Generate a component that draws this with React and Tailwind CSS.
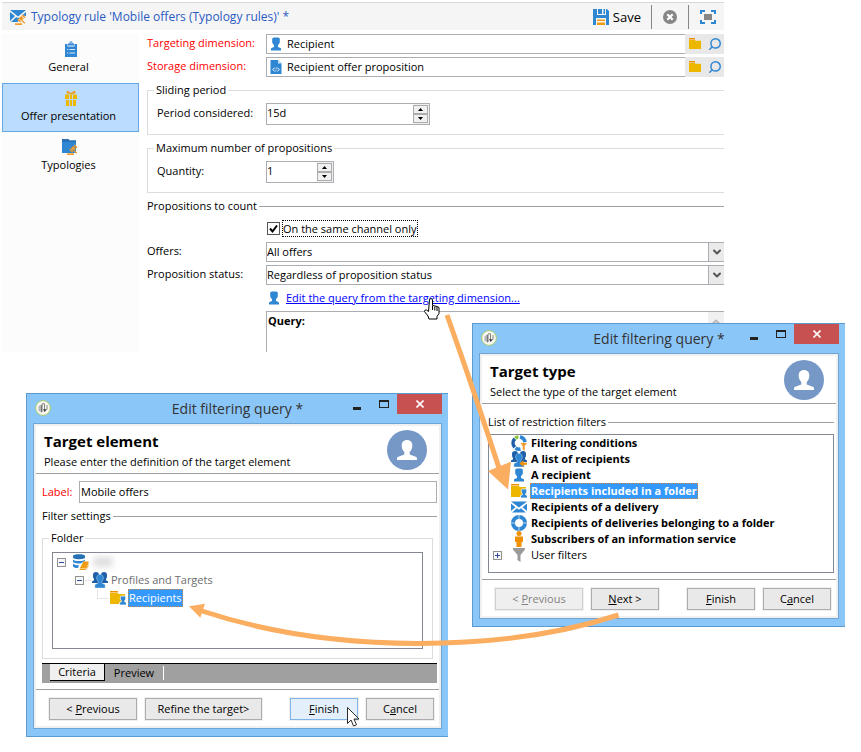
import { ChevronDown, ChevronUp, Search } from 'lucide-react';

function PersonIcon() {
  return (
    <svg viewBox="0 0 16 16" className="h-4 w-4" fill="#2f86d2">
      <path d="M6 1.500h4c1.200 0 1.800.7 1.800 1.800v2.500C11.800 7.500 10.800 8.500 10 9v2l2.500 1c.4.200.5.500.5 1v1.500H3V13c0-.5.1-.8.5-1L6 11V9C5.200 8.500 4.200 7.500 4.200 5.800V3.300C4.200 2.200 4.800 1.500 6 1.500z" />
    </svg>
  );
}

function Avatar() {
  return (
    <svg viewBox="0 0 40 40" className="mt-1 h-10 w-10 shrink-0">
      <circle cx="20" cy="20" r="20" fill="#7698c6" />
      <path d="M20 10c3.500 0 5.300 2.300 5.300 5.500 0 3-1 5-2.600 6.500v2.500l6 2.200c1 .4 1.300 1 1.300 2V30H10v-1.300c0-1 .3-1.600 1.300-2l6-2.200V22c-1.600-1.500-2.600-3.500-2.600-6.500 0-3.200 1.800-5.500 5.300-5.500z" fill="#fff" />
    </svg>
  );
}

function GavelShape() {
  return (
    <g fill="#f29b2a">
      <path d="M12.600 5.500l3 2.800-1 1-3-2.800z" />
      <path d="M11.300 7l2.600 2.500-2.700 2.400-2.600-2.500z" />
      <path d="M8.200 9.800l3 2.800-1 1-3-2.800z" />
      <path d="M12.300 11l3 2.700-.9 1L11.500 12z" />
      <path d="M5 14.300h7V16H5z" />
    </g>
  );
}

function MailRuleIcon() {
  return (
    <svg viewBox="0 0 18 16" className="h-4 w-[18px]">
      <path d="M0 1h16L8 7.500z" fill="#2f86d2" />
      <path d="M0 3l5 4-5 5zM16 3v4l-4-.5zM1 13l5.200-5L8 9.300 9.500 8 8 13z" fill="#2f86d2" />
      <GavelShape />
    </svg>
  );
}

function MailIcon() {
  return (
    <svg viewBox="0 0 16 16" className="h-4 w-4" fill="#2f86d2">
      <path d="M0 2.500h16L8 8.500zM0 4.500l4.500 3.700L0 12zM16 4.500l-4.500 3.700L16 12zM1 13.500l5-4.300 2 1.500 2-1.500 5 4.300z" />
    </svg>
  );
}

function ClipboardIcon() {
  return (
    <svg viewBox="0 0 16 16" className="h-4 w-4">
      <path d="M2 3h2.500v2.500h7V3H14v13H2z" fill="#2f86d2" />
      <path d="M5 2.500h1.500C6.500 1 7 .3 8 .3s1.500.7 1.500 2.200H11v2H5z" fill="#2f86d2" />
      <circle cx="8" cy="2" r=".7" fill="#fff" />
      <path d="M4 8h1.200v1H4zm2.500 0H12v1H6.500zM4 11.500h1.200v1H4zm2.500 0H12v1H6.500z" fill="#d9ebfa" />
    </svg>
  );
}

function GiftIcon() {
  return (
    <svg viewBox="0 0 16 16" className="h-4 w-4">
      <path d="M8 3.500C7 1 3.500 0 3.500 2.300c0 1.400 2 2 4.500 2s4.500-.6 4.500-2C12.500 0 9 1 8 3.500z" fill="#f09a12" />
      <path d="M5.800 2.300l1.300 1H5.300zM10.200 2.300l-1.300 1h1.800z" fill="#bbdcfc" />
      <path d="M2 4.500h12V9H2zM3 10h10v6H3z" fill="#edb700" />
      <path d="M6 4.500h.9V16H6zM9.100 4.500h.9V16h-.9z" fill="#bbdcfc" />
    </svg>
  );
}

function FolderRuleIcon() {
  return (
    <svg viewBox="0 0 17 16" className="h-4 w-[17px]">
      <path d="M0 0h6.500l1 1.300H14V3H0z" fill="#2672b5" />
      <path d="M0 3h14v11H0z" fill="#2f86d2" />
      <GavelShape />
    </svg>
  );
}

function DocumentIcon() {
  return (
    <svg viewBox="0 0 16 16" className="h-4 w-4">
      <path d="M2.500 1h7.500l3.500 3.500V15h-11z" fill="#2f86d2" />
      <path d="M10 1l3.500 3.500H10z" fill="#cfe4f7" />
      <path d="M6.800 8.500l-2 2 2 2M9.200 8.500l2 2-2 2" stroke="#fff" fill="none" />
      <path d="M8.500 8.800l-1 3.500" stroke="#9cc6ec" fill="none" />
    </svg>
  );
}

function FolderIcon() {
  return (
    <svg viewBox="0 0 14 12" className="h-3 w-3.5">
      <path d="M1 0h6v1.500H1z" fill="#f09000" />
      <path d="M1 2h6l.5.8H13V11H1z" fill="#edb700" />
    </svg>
  );
}

function PersonFolderIcon() {
  return (
    <svg viewBox="0 0 16 16" className="h-4 w-4">
      <path d="M0 1h8v1.500H0z" fill="#f09000" />
      <path d="M0 3h8l.5 1H15v10H0z" fill="#edb700" />
      <path d="M11.500 6h3c.8 0 1.200.5 1.200 1.300v1.500c0 .8-.5 1.400-1 1.700v1.300l1.800.7v2.500H9.500v-2.500l1.800-.7v-1.300c-.5-.3-1-.9-1-1.700V7.300c0-.8.4-1.300 1.200-1.300z" fill="#2f86d2" stroke="#fff" strokeWidth=".8" />
    </svg>
  );
}

function PeopleIcon({ arrow = false }) {
  return (
    <svg viewBox="0 0 16 16" className="h-4 w-4">
      <path d="M4 0c2 0 3 1 3 3v8H0V9.500l2-1.200V7C1 6 1 4.500 1 3c0-2 1-3 3-3zM12 0c2 0 3 1 3 3 0 1.500 0 3-1 4v1.300l2 1.200V11H9V3c0-2 1-3 3-3z" fill="#1f5fa8" />
      <path d="M8 2.500c2.200 0 3.300 1.500 3.300 3.500 0 1.600-.7 2.600-1.500 3.500v1.600l3.200 1.600V16H3v-3.300l3.200-1.600V9.500C5.400 8.600 4.700 7.600 4.700 6c0-2 1.100-3.500 3.300-3.500z" fill="#2f86d2" stroke="#9cc6ec" strokeWidth=".6" />
      {arrow && <path d="M16 11.500v2.200h-3.500V16L8.500 12.600l4-3.400v2.300z" fill="#f09000" />}
    </svg>
  );
}

function ConditionsIcon() {
  return (
    <svg viewBox="0 0 16 16" className="h-4 w-4" fill="none" strokeWidth="3.600">
      <path d="M3.800 3.800a6 6 0 0 0 0 8.400" stroke="#1f5fa8" />
      <path d="M4.200 3.200A6 6 0 0 1 7.400 2" stroke="#8cc63f" />
      <path d="M9 2a6 6 0 0 1 5 5.200" stroke="#2f86d2" />
      <path d="M4.500 13A6 6 0 0 0 9.500 14" stroke="#2f86d2" />
      <path d="M9.500 8H16l-2.300 3V16l-2-1.500V11z" fill="#f29b2a" />
    </svg>
  );
}

function RingIcon() {
  return (
    <svg viewBox="0 0 16 16" className="h-4 w-4" fill="none">
      <circle cx="8" cy="8" r="6" stroke="#2f86d2" strokeWidth="4" />
      <path d="M8 0v4M8 12v4M0 8h4M12 8h4" stroke="#b9d8f2" strokeWidth="1" />
    </svg>
  );
}

function SubscriberIcon() {
  return (
    <svg viewBox="0 0 16 16" className="h-4 w-4" fill="#f09000">
      <circle cx="8" cy="2.500" r="2.500" />
      <path d="M4 5.500h8V11h-1.500v5h-5v-5H4z" />
    </svg>
  );
}

function FunnelIcon() {
  return (
    <svg viewBox="0 0 16 16" className="h-4 w-4" fill="#9a9a9a">
      <path d="M2 1h12v1.500L9.500 8v7L6.500 13V8L2 2.500z" />
    </svg>
  );
}

function DatabaseIcon() {
  return (
    <svg viewBox="0 0 16 16" className="h-4 w-4">
      <path d="M0 2C0-.3 12-.3 12 2v1.500c0 2.300-12 2.300-12 0z" fill="#2672b5" />
      <path d="M0 5.500c1 2 11 2 12 0V7L7.500 9.500C4 9.500 0 9 0 7.500zM0 9.500c1 1.500 3.500 1.800 6 1.700L5 14c-3 0-5-.6-5-2z" fill="#2f86d2" />
      <path d="M10.500 7.500H16l-3.500 6.500H7z" fill="#f09a12" />
      <path d="M7 14h5.500l3-5M6.500 15.500h6l3-4" stroke="#f09a12" fill="none" />
    </svg>
  );
}

function SaveIcon() {
  return (
    <svg viewBox="0 0 16 16" className="h-4 w-4">
      <path d="M0 0h4v6h9V0h1l2 2v14H0z" fill="#2f86d2" />
      <path d="M5 0h4v5H5zM10.500 0H12v5h-1.500z" fill="#2f86d2" />
      <path d="M3 9h10v7H3z" fill="#f5f5f5" />
      <path d="M4 10.500h8V12H4zM4 13.500h8V16H4z" fill="#f09a12" />
    </svg>
  );
}

function CloseCircleIcon() {
  return (
    <svg viewBox="0 0 14 14" className="h-3.5 w-3.5">
      <circle cx="7" cy="7" r="7" fill="#868686" />
      <path d="M4.300 4.300l5.400 5.400M9.700 4.300L4.300 9.700" stroke="#fff" strokeWidth="2.200" />
    </svg>
  );
}

function FitIcon() {
  return (
    <svg viewBox="0 0 16 14" className="h-3.5 w-4">
      <path d="M1 4V1h4M11 1h4v3M15 10v3h-4M5 13H1v-3" stroke="#2f86d2" strokeWidth="2" fill="none" />
      <path d="M4 4h8v6H4z" fill="#868686" />
    </svg>
  );
}

function AppIcon() {
  return (
    <svg viewBox="0 0 16 16" className="h-4 w-4">
      <circle cx="8" cy="8" r="7.400" fill="#f7f8f2" stroke="#a6c96a" />
      <path d="M3.500 6l3-1.500v7.500l-3-1z" fill="#b5b5b5" />
      <path d="M6 5l1.500-1v8L6 12.500z" fill="#777" />
      <path d="M7 3.800h2.500V10M12 5v4.500" stroke="#777" strokeWidth=".9" fill="none" />
      <path d="M8 9.300h4L9.500 12z" fill="#3c3c3c" />
    </svg>
  );
}

function Toggle({ open }) {
  return (
    <svg viewBox="0 0 9 9" className="h-[9px] w-[9px] shrink-0">
      <rect x=".5" y=".5" width="8" height="8" fill="#f7f7f7" stroke="#919191" />
      <path d="M2 4.500h5" stroke="#33499b" />
      {!open && <path d="M4.500 2v5" stroke="#33499b" />}
    </svg>
  );
}

function Spinner({ id, value, className }) {
  return (
    <div className={`flex h-[22px] border border-[#abadb3] bg-white ${className}`}>
      <input id={id} defaultValue={value} className="h-[18px] w-0 grow outline-none" />
      <div className="flex w-4 flex-col bg-[#f0f0f0] py-px pr-px">
        <button aria-label="Increase" className="flex flex-1 items-center justify-center border border-[#acacac] bg-[#f0f0f0]">
          <svg viewBox="0 0 5 3" className="h-[3px] w-[5px]"><path d="M0 3h5L2.500 0z" /></svg>
        </button>
        <button aria-label="Decrease" className="flex flex-1 items-center justify-center border border-[#acacac] bg-[#f0f0f0]">
          <svg viewBox="0 0 5 3" className="h-[3px] w-[5px]"><path d="M0 0h5L2.500 3z" /></svg>
        </button>
      </div>
    </div>
  );
}

function PickerRow({ id, label, value, icon }) {
  return (
    <div className="flex h-5">
      <label htmlFor={id} className="w-[119px] shrink-0 text-[#ff0000]">{label}</label>
      <div className="flex grow items-center gap-[3px] border border-r-0 border-[#abadb3] bg-white pl-px">
        {icon}
        <input id={id} defaultValue={value} className="w-0 grow outline-none" />
      </div>
      <div className="flex w-[39px] items-center justify-between bg-[#e8e8e8] pr-0.5 pl-[3px]">
        <button aria-label={`Open ${value}`}><FolderIcon /></button>
        <button aria-label={`Find ${value}`}>
          <Search className="h-3.5 w-3.5 -scale-x-100 text-[#2f86d2]" strokeWidth={2.5} />
        </button>
      </div>
    </div>
  );
}

function Dropdown({ id, label, value }) {
  return (
    <div className="flex h-5">
      <label htmlFor={id} className="w-[119px] shrink-0">{label}</label>
      <div className="relative grow">
        <select id={id} className="block h-5 w-full appearance-none border border-r-0 border-[#abadb3] bg-white outline-none">
          <option>{value}</option>
        </select>
        <span className="pointer-events-none absolute top-px right-0 bottom-px flex w-4 items-center justify-center border-l border-[#abadb3] bg-[#eaeaea]">
          <ChevronDown className="h-3 w-3 text-[#555]" strokeWidth={4} />
        </span>
      </div>
    </div>
  );
}

function Divider({ label, className = '' }) {
  return (
    <div className={`flex h-4 items-center gap-0.5 ${className}`}>
      <span className="leading-4">{label}</span>
      <span className="h-px grow bg-[#a0a0a0]" />
    </div>
  );
}

function NavItem({ icon, label, active = false }) {
  return (
    <button
      className={`flex h-[49px] w-full flex-col items-center gap-0.5 border pt-1.5 ${
        active ? 'border-[#66a7e8] bg-[#bbdcfc]' : 'border-transparent'
      }`}
    >
      {icon}
      <span className="pr-1 leading-4">{label}</span>
    </button>
  );
}

// The character after the & is the underlined access key
function DialogButton({ label, className = 'w-[68px]', disabled = false, focused = false }) {
  const [before, after] = label.includes('&') ? label.split('&') : [label, ''];
  const tone = focused ? 'border-[#7eb4ea] bg-[#e3f0fc]' : 'border-[#acacac] bg-[#e9e9e9]';
  return (
    <button
      disabled={disabled}
      className={`h-[22px] border leading-5 whitespace-nowrap outline outline-[#f0f0f0] disabled:border-[#d0d0d0] disabled:bg-[#efefef] disabled:text-[#838383] ${tone} ${className}`}
    >
      {before}
      {after && <u>{after[0]}</u>}
      {after.slice(1)}
    </button>
  );
}

function Dialog({ heading, subtitle, className, children }) {
  return (
    <section className={`absolute flex flex-col border border-r-0 border-[#5b9bd0] bg-[#8bc6f9] pr-1.5 pb-[7px] pl-1.5 ${className}`}>
      <header className="relative flex h-[29px] shrink-0 items-start justify-between">
        <span className="mt-1.5 ml-0.5"><AppIcon /></span>
        <h1 className="absolute inset-x-0 top-1 text-center text-[14px] leading-[22px] text-[#333]">Edit filtering query *</h1>
        <div className="relative flex">
          <button aria-label="Minimize" className="flex h-5 w-[26px] items-center justify-center">
            <span className="mt-2 h-[3px] w-2 bg-[#222]" />
          </button>
          <button aria-label="Maximize" className="flex h-5 w-[27px] items-center justify-center">
            <span className="h-2 w-2.5 border border-t-2 border-[#222]" />
          </button>
          <button aria-label="Close" className="flex h-5 w-[45px] items-center justify-center bg-[#c75050]">
            <svg viewBox="0 0 8 8" className="h-2 w-2"><path d="M.5.5l7 7M7.500.5l-7 7" stroke="#fff" strokeWidth="1.600" /></svg>
          </button>
        </div>
      </header>
      <div className="flex grow flex-col border border-[#6fa5d2] bg-white outline-2 -outline-offset-3 outline-[#f0f0f0]">
        <div className="mx-0.5 mt-0.5 flex h-12 shrink-0 justify-between border-b border-[#a0a0a0] pr-3 pl-2">
          <div>
            <h2 className="mt-[3px] text-[15px] leading-6 font-bold">{heading}</h2>
            <p className="mt-px leading-4">{subtitle}</p>
          </div>
          <Avatar />
        </div>
        {children}
      </div>
    </section>
  );
}

const filters = [
  { label: 'Filtering conditions', icon: <ConditionsIcon /> },
  { label: 'A list of recipients', icon: <PeopleIcon arrow /> },
  { label: 'A recipient', icon: <PersonIcon /> },
  { label: 'Recipients included in a folder', icon: <PersonFolderIcon />, selected: true },
  { label: 'Recipients of a delivery', icon: <MailIcon /> },
  { label: 'Recipients of deliveries belonging to a folder', icon: <RingIcon /> },
  { label: 'Subscribers of an information service', icon: <SubscriberIcon /> },
  { label: 'User filters', icon: <FunnelIcon />, group: true },
];

function TypologyRule() {
  return (
    <main className="mr-[137px] ml-0.5 pt-0.5">
      <header className="flex h-7 items-center border-t border-[#d9d9d9] bg-[#f5f5f5] pl-2">
        <MailRuleIcon />
        <h1 className="ml-[3px] grow text-[12px] text-[#2a5bc4]">Typology rule 'Mobile offers (Typology rules)' *</h1>
        <button className="flex items-center gap-1 text-[13px]">
          <SaveIcon />
          Save
        </button>
        <span className="ml-2.5 h-6 w-px bg-[#868686]" />
        <button aria-label="Cancel" className="px-[11px]"><CloseCircleIcon /></button>
        <span className="h-6 w-px bg-[#868686]" />
        <button aria-label="Fit window" className="pr-2 pl-[11px]"><FitIcon /></button>
      </header>
      <div className="mt-1 flex">
        <nav className="w-[137px] shrink-0 bg-[#fcfcfc]">
          <NavItem icon={<ClipboardIcon />} label="General" />
          <NavItem icon={<GiftIcon />} label="Offer presentation" active />
          <NavItem icon={<FolderRuleIcon />} label="Typologies" />
        </nav>
        <form className="ml-2 flex grow flex-col">
          <div className="flex flex-col gap-[3px]">
            <PickerRow id="targeting" label="Targeting dimension:" value="Recipient" icon={<PersonIcon />} />
            <PickerRow id="storage" label="Storage dimension:" value="Recipient offer proposition" icon={<DocumentIcon />} />
          </div>
          <fieldset className="mt-[5px] border border-r-0 border-[#dcdcdc] pt-[5px] pb-[9px] pl-[9px]">
            <legend className="-ml-[3px] pr-0.5 pl-0.5 leading-4">Sliding period</legend>
            <div className="flex">
              <label htmlFor="period" className="w-[109px] leading-5">Period considered:</label>
              <Spinner id="period" value="15d" className="w-[164px]" />
            </div>
          </fieldset>
          <fieldset className="mt-[5px] border border-r-0 border-[#dcdcdc] pt-[5px] pb-[9px] pl-[9px]">
            <legend className="-ml-[3px] pr-0.5 pl-0.5 leading-4">Maximum number of propositions</legend>
            <div className="flex">
              <label htmlFor="quantity" className="w-[109px] leading-5">Quantity:</label>
              <Spinner id="quantity" value="1" className="w-[68px]" />
            </div>
          </fieldset>
          <Divider label="Propositions to count" className="mt-[5px]" />
          <label className="mt-1.5 ml-[120px] flex h-[17px] items-center gap-0.5">
            <span className="relative flex h-[13px] w-[13px]">
              <input type="checkbox" defaultChecked className="h-[13px] w-[13px] appearance-none border border-[#555] bg-white" />
              <svg viewBox="0 0 13 13" className="pointer-events-none absolute inset-0">
                <path d="M3 6.500l2.500 3L10 3.500" stroke="#000" strokeWidth="2" fill="none" />
              </svg>
            </span>
            <span className="border border-dotted border-black leading-[15px]">On the same channel only</span>
          </label>
          <div className="mt-[5px] flex flex-col gap-[3px]">
            <Dropdown id="offers" label="Offers:" value="All offers" />
            <Dropdown id="status" label="Proposition status:" value="Regardless of proposition status" />
          </div>
          <div className="mt-[5px] ml-[119px] flex h-4 items-center gap-1">
            <PersonIcon />
            <a href="#query" className="text-[#0000ff] underline">Edit the query from the targeting dimension...</a>
          </div>
          <div className="mt-[5px] ml-[119px] flex h-[41px] justify-between border-t border-l border-[#abadb3] pl-px">
            <b className="leading-[18px]">Query:</b>
            <span className="flex w-4 justify-center bg-[#f0f0f0] pt-1">
              <ChevronUp className="h-3 w-3 text-[#bbb]" strokeWidth={4} />
            </span>
          </div>
        </form>
      </div>
    </main>
  );
}

function TargetType() {
  return (
    <Dialog heading="Target type" subtitle="Select the type of the target element" className="top-[323px] left-[472px] h-[304px] w-[373px]">
      <Divider label="List of restriction filters" className="mt-2.5 mr-1 ml-2" />
      <ul className="mx-1 mt-1 ml-2 h-[139px] border border-[#828790]">
        {filters.map((filter) => (
          <li key={filter.label} className="flex h-4 items-center pl-1">
            <span className="flex w-[18px]">{filter.group && <Toggle />}</span>
            {filter.icon}
            <span
              className={`ml-[3px] border border-dotted leading-[14px] ${filter.group ? '' : 'font-bold'} ${
                filter.selected ? 'border-[#cc8844] bg-[#3399ff] text-white' : 'border-transparent'
              }`}
            >
              {filter.label}
            </span>
          </li>
        ))}
      </ul>
      <footer className="mx-0.5 mt-1.5 flex justify-end border-t border-[#a0a0a0] pt-2 pr-[5px]">
        <DialogButton label="< &Previous" className="w-[88px]" disabled />
        <DialogButton label="&Next >" className="ml-2 w-[68px]" />
        <DialogButton label="&Finish" className="ml-7 w-[68px]" />
        <DialogButton label="C&ancel" className="ml-2 w-[68px]" />
      </footer>
    </Dialog>
  );
}

function TargetElement() {
  return (
    <Dialog heading="Target element" subtitle="Please enter the definition of the target element" className="top-[393px] left-[26px] h-[344px] w-[422px]">
      <div className="mt-[7px] mr-1 ml-2 flex h-[22px] items-center">
        <label htmlFor="label" className="w-[37px] text-[#ff0000]">Label:</label>
        <input id="label" defaultValue="Mobile offers" className="h-[22px] w-0 grow border border-[#abadb3] px-px pb-0.5 outline-none" />
      </div>
      <Divider label="Filter settings" className="mt-[5px] mr-1 ml-2" />
      <fieldset className="mt-1.5 mr-2 ml-2 border border-[#dcdcdc] px-[9px] pt-1.5 pb-[9px]">
        <legend className="-ml-[3px] px-0.5 leading-4">Folder</legend>
        <ul className="h-[97px] border border-[#828790] pl-1">
          <li className="flex h-[18px] items-center">
            <Toggle open />
            <span className="ml-[7px]"><DatabaseIcon /></span>
            <span className="ml-1 h-2.5 w-5 rounded bg-[#dedede] blur-[3px]" />
          </li>
          <li className="flex h-[18px] items-center pl-[18px] text-[#6d6d6d]">
            <Toggle open />
            <span className="mx-px h-px w-1.5 bg-[#e4e4e4]" />
            <PeopleIcon />
            <span className="ml-[3px]">Profiles and Targets</span>
          </li>
          <li className="flex h-[18px] items-center pl-10">
            <span className="mr-px mb-2 h-2.5 w-3 border-b border-l border-[#e4e4e4]" />
            <PersonFolderIcon />
            <span className="ml-0.5 border border-dotted border-[#cc8844] bg-[#3399ff] leading-4 text-white">Recipients</span>
          </li>
        </ul>
      </fieldset>
      <div role="tablist" className="mt-1 mr-1 ml-2 flex h-5 border-t border-black bg-[#a0a0a0] pl-2">
        <button role="tab" aria-selected="true" className="h-[17px] w-[55px] border-r border-b border-black bg-[#f0f0f0] leading-4">Criteria</button>
        <button role="tab" aria-selected="false" className="mt-0.5 h-3.5 w-[59px] border-r border-white leading-[14px]">Preview</button>
      </div>
      <footer className="mx-0.5 mt-1.5 flex justify-end border-t border-[#a0a0a0] pt-2 pr-[5px]">
        <DialogButton label="< &Previous" className="w-[88px]" />
        <DialogButton label="Refine the target>" className="ml-2 w-[117px]" />
        <DialogButton label="&Finish" className="ml-7 w-[68px]" focused />
        <DialogButton label="C&ancel" className="ml-2 w-[68px]" />
      </footer>
    </Dialog>
  );
}

function Annotations() {
  return (
    <svg viewBox="0 0 861 752" className="pointer-events-none absolute top-0 left-0 h-[752px] w-[861px]">
      <g stroke="#fbad60" strokeWidth="5" fill="none">
        <path d="M447 315Q473 388 499 468" />
        <path d="M618.500 615C505 652 335 655 202 611" />
      </g>
      <path d="M508 489.500L488 471 511 461.500zM189 606.300l16-2.600-4.700 14z" fill="#fbad60" />
      {/* hand pointer */}
      <path
        d="M429.500 299.500q1.500-2 3 0v6l2 .3 2.500.7 2 1v6l-2 3v2.500h-8l-1-3-3.500-4.500q0-2 2-1.500l2 1.500z"
        fill="#fff"
        stroke="#000"
      />
      <path d="M432.500 306v4M434.800 306.500v4M437 307v4" stroke="#000" fill="none" />
      {/* arrow pointer */}
      <path d="M347.500 707.500v16l3.500-3.500 2.500 6 3-1.200-2.500-5.800h5z" fill="#fff" stroke="#2b2b2b" />
    </svg>
  );
}

export default function App() {
  return (
    <div className="relative min-h-[752px] bg-white font-['Open_Sans',sans-serif] text-[11px] leading-[18px] text-black">
      <TypologyRule />
      <TargetType />
      <TargetElement />
      <Annotations />
    </div>
  );
}
